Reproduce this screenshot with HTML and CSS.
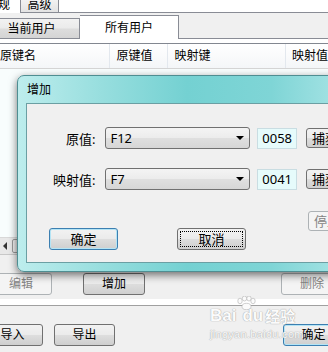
FILE: index.html
```html
<!DOCTYPE html>
<html lang="zh-CN">
<head>
  <meta charset="UTF-8" />
  <title>键盘映射</title>
  <link rel="stylesheet" href="styles.css">
</head>
<body>

  <div class="outer-tabs">
    <span class="otab sel">常规</span>
    <span class="otab">高级</span>
    <span class="otab-fill"></span>
  </div>

  <div class="tabs">
    <div class="tab">当前用户</div>
    <div class="tab active">所有用户</div>
    <div class="tab-fill"></div>
  </div>

  <div class="page">
    <div class="list">
      <div class="list-head">
        <div class="col c1">原键名</div>
        <div class="col c2">原键值</div>
        <div class="col c3">映射键</div>
        <div class="col c4">映射值</div>
      </div>
      <div class="list-body"></div>
      <div class="hscroll">
        <span class="sb-arrow"></span>
        <span class="sb-thumb"></span>
      </div>
    </div>
    <div class="actions">
      <button class="btn dis edit">编辑</button>
      <button class="btn add">增加</button>
      <button class="btn dis del">删除</button>
    </div>
  </div>

  <div class="footer">
    <button class="btn imp">导入</button>
    <button class="btn exp">导出</button>
    <button class="btn default ok-main">确定</button>
  </div>

  <!-- 增加 对话框 -->
  <div class="dialog">
    <div class="dlg-title">增加</div>
    <div class="dlg-client">
      <div class="dlg-row">
        <label class="dlg-label">原值:</label>
        <div class="combo">F12<span class="arrow"></span></div>
        <div class="code">0058</div>
        <button class="btn cap">捕获</button>
      </div>
      <div class="dlg-row second">
        <label class="dlg-label">映射值:</label>
        <div class="combo">F7<span class="arrow"></span></div>
        <div class="code">0041</div>
        <button class="btn cap">捕获</button>
      </div>
      <div class="dlg-foot">
        <button class="btn default ok">确定</button>
        <button class="btn focus cancel">取消</button>
        <button class="btn dis stop">停止</button>
      </div>
    </div>
  </div>

  <div class="watermark">
    <div class="wm-logo">
      <span>Bai</span>
      <svg class="paw" width="20" height="14" viewBox="0 0 20 14">
        <ellipse cx="4" cy="5" rx="2.2" ry="2.8" />
        <ellipse cx="8.5" cy="2.5" rx="2.2" ry="2.5" />
        <ellipse cx="13" cy="2.5" rx="2.2" ry="2.5" />
        <ellipse cx="17" cy="5" rx="2.2" ry="2.8" />
        <ellipse cx="10.5" cy="10.5" rx="4.5" ry="3.2" />
      </svg>
      <span>du</span>
      <span class="wm-cn">经验</span>
    </div>
    <div class="wm-url">jingyan.baidu.com</div>
  </div>

</body>
</html>
```

FILE: styles.css
```css
* {
  box-sizing: border-box;
}

html, body {
  margin: 0;
}

body {
  width: 328px;
  height: 352px;
  overflow: hidden;
  position: relative;
  background: #f0f0f0;
  font-family: "Noto Sans", "Noto Sans CJK SC", sans-serif;
  font-size: 12px;
  color: #000;
}

/* buttons, win7 look */
.btn {
  font: inherit;
  height: 22px;
  padding: 0;
  line-height: 20px;
  border: 1px solid #707070;
  border-radius: 3px;
  background: linear-gradient(#f2f2f2, #ebebeb 48%, #dddddd 52%, #cfcfcf);
  color: #000;
  text-align: center;
  flex-shrink: 0;
}

.btn.default {
  border-color: #3c7fb1;
  box-shadow: inset 0 0 0 1px #b4e4f5;
}

.btn.focus {
  outline: 1px dotted #000;
  outline-offset: -4px;
}

.btn.dis {
  border-color: #adb2b5;
  background: #f4f4f4;
  color: #838383;
}

/* outer tabs */
.outer-tabs {
  display: flex;
  height: 13px;
  background: #fff;
}

.otab {
  line-height: 10px;
  font-size: 12px;
  overflow: hidden;
}

.otab.sel {
  width: 20px;
  text-indent: -14px;
  white-space: nowrap;
}

.otab:not(.sel) {
  width: 39px;
  border: 1px solid #898c95;
  border-top: none;
  background: linear-gradient(#f2f2f2, #e3e3e3);
  text-align: center;
}

.otab-fill {
  flex: 1;
  border-bottom: 1px solid #898c95;
}

/* inner tabs */
.tabs {
  display: flex;
  align-items: flex-end;
  height: 26px;
}

.tab {
  width: 96px;
  height: 21px;
  margin-left: -16px;
  border: 1px solid #898c95;
  border-left: none;
  background: linear-gradient(#f2f2f2, #ebebeb 48%, #dddddd 52%, #d4d4d4);
  text-align: center;
  line-height: 19px;
}

.tab.active {
  width: 99px;
  height: 24px;
  margin-left: 0;
  background: #fff;
  border-bottom: none;
  line-height: 24px;
}

.tab-fill {
  flex: 1;
  border-bottom: 1px solid #898c95;
}

/* tab page */
.page {
  background: #fff;
  padding-top: 4px;
  padding-bottom: 6px;
  border-bottom: 1px solid #a0a0a0;
}

.list {
  border-top: 1px solid #828790;
  background: #fff;
}

.list-head {
  display: flex;
  height: 25px;
  margin-left: -7px;
  border-bottom: 1px solid #d5d5d5;
  background: linear-gradient(#ffffff, #f4f6f8);
}

.col {
  padding-left: 7px;
  line-height: 24px;
  border-right: 1px solid #e3e8ee;
  white-space: nowrap;
}

.c1 { width: 119px; }
.c2 { width: 60px; }
.c3 { width: 120px; padding-left: 6px; }
.c4 { flex: 1; padding-left: 6px; border-right: none; }

.list-body {
  height: 168px;
  background: #f8fdfd;
}

.hscroll {
  display: flex;
  align-items: center;
  height: 18px;
  background: #e8e8e8;
  border-top: 1px solid #d8d8d8;
  border-bottom: 1px solid #c8c8c8;
}

.sb-arrow {
  width: 0;
  height: 0;
  margin-left: 3px;
  border-top: 4px solid transparent;
  border-bottom: 4px solid transparent;
  border-right: 4px solid #333;
}

.sb-thumb {
  width: 8px;
  height: 14px;
  margin-left: 5px;
  border: 1px solid #9a9a9a;
  border-radius: 2px;
  background: linear-gradient(90deg, #f2f2f2, #d8d8d8);
}

.actions {
  display: flex;
  height: 44px;
  padding-top: 18px;
  background: #f0f0f0;
}

.actions .btn {
  width: 62px;
}

.edit { margin-left: -10px; }
.add { margin-left: 31px; }
.del { margin-left: auto; margin-right: -15px; }

/* footer */
.footer {
  display: flex;
  padding-top: 18px;
}

.footer .btn {
  width: 61px;
}

.imp { margin-left: -18px; }
.exp { margin-left: 11px; }
.ok-main { margin-left: auto; margin-right: -16px; }

/* dialog overlay */
.dialog {
  position: absolute;
  left: 17px;
  top: 75px;
  width: 340px;
  height: 197px;
  padding: 0 0 8px 8px;
  border: 1px solid #4f8e92;
  border-radius: 7px;
  background: linear-gradient(90deg, #bdeded 0%, #97dede 25%, #74d1d2 50%, #7fd5d6 75%, #ade6e7 100%);
  box-shadow: 0 3px 9px rgba(0, 0, 0, 0.55);
  display: flex;
  flex-direction: column;
}

.dlg-title {
  height: 27px;
  padding-left: 1px;
  padding-top: 2px;
  line-height: 24px;
  color: #000;
}

.dlg-client {
  flex: 1;
  padding-top: 23px;
  background: #f0f0f0;
  border: 1px solid #6b9fa3;
  border-right: none;
}

.dlg-row {
  display: flex;
  align-items: center;
  height: 22px;
}

.dlg-row.second {
  margin-top: 19px;
}

.dlg-label {
  width: 69px;
  margin-right: 10px;
  text-align: right;
  font-size: 13px;
}

.combo {
  position: relative;
  width: 146px;
  height: 22px;
  padding-left: 4px;
  line-height: 20px;
  border: 1px solid #707070;
  border-radius: 3px;
  background: linear-gradient(#f4f4f4, #ececec 48%, #dfdfdf 52%, #d6d6d6);
  font-size: 13px;
}

.arrow {
  position: absolute;
  right: 5px;
  top: 8px;
  width: 0;
  height: 0;
  border-left: 4px solid transparent;
  border-right: 4px solid transparent;
  border-top: 4px solid #000;
}

.code {
  width: 40px;
  height: 21px;
  margin-left: 7px;
  padding-left: 4px;
  line-height: 19px;
  border: 1px solid #c9dde2;
  background: #e6fbfb;
  font-size: 13px;
}

.cap {
  width: 50px;
  height: 20px;
  margin-left: 9px;
  line-height: 18px;
  text-align: left;
  padding-left: 5px;
  font-size: 13px;
}

.dlg-foot {
  display: flex;
  align-items: flex-start;
  margin-top: 21px;
}

.ok, .cancel {
  width: 69px;
  margin-top: 17px;
  font-size: 13px;
}

.ok { margin-left: 22px; }
.cancel { margin-left: 59px; }

.stop {
  width: 50px;
  height: 20px;
  margin-left: 62px;
  line-height: 18px;
  text-align: left;
  padding-left: 5px;
  font-size: 13px;
}

/* watermark over the footer */
.watermark {
  position: absolute;
  left: 210px;
  top: 296px;
  color: #fbfbfb;
  text-shadow: 0 0 1px #a8a8a8, 0 0 1px #a8a8a8;
}

.wm-logo {
  display: flex;
  align-items: flex-end;
  height: 29px;
  font-family: "Liberation Sans", sans-serif;
  font-weight: bold;
  font-size: 17px;
  line-height: 18px;
}

.paw {
  fill: #fbfbfb;
  stroke: #b0b0b0;
  stroke-width: 0.6;
  align-self: flex-start;
  margin: 0 -14px 0 0;
}

.wm-cn {
  margin-left: 2px;
  font-family: "Noto Sans CJK SC", sans-serif;
  font-size: 15px;
}

.wm-url {
  margin-top: 3px;
  font-family: "Liberation Sans", sans-serif;
  font-size: 11px;
  letter-spacing: 0.3px;
}
```
